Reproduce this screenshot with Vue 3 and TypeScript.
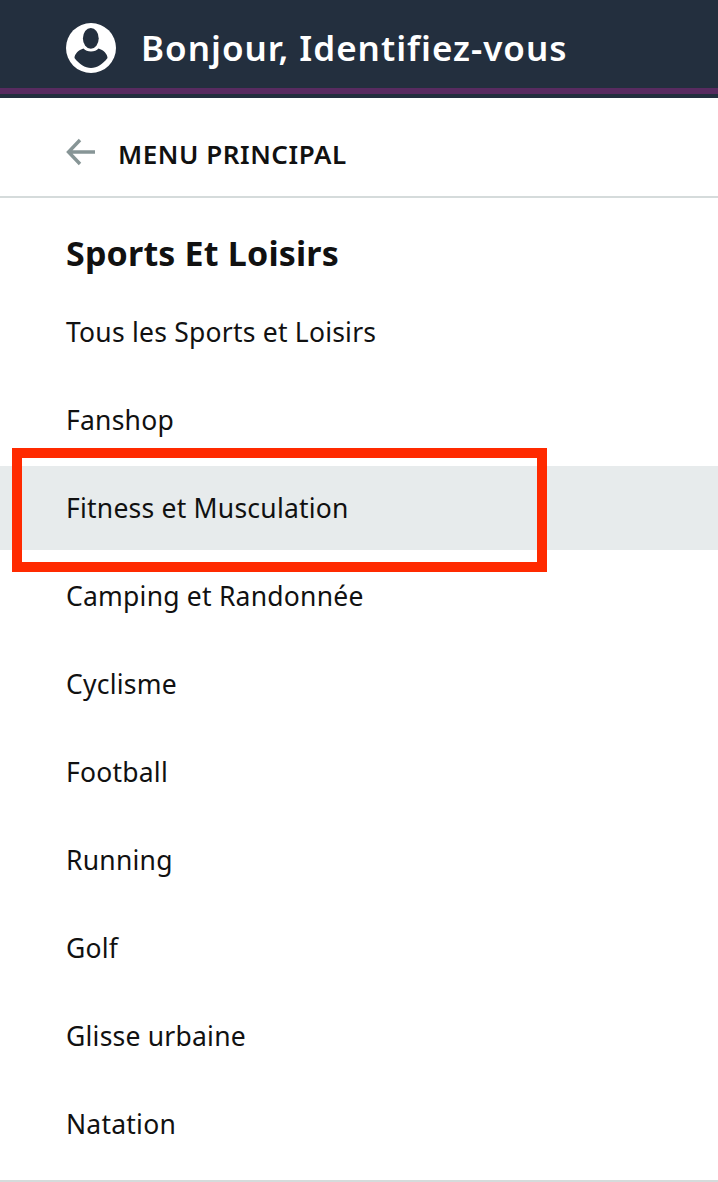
<script setup lang="ts">
const items: string[] = [
  'Tous les Sports et Loisirs',
  'Fanshop',
  'Fitness et Musculation',
  'Camping et Randonnée',
  'Cyclisme',
  'Football',
  'Running',
  'Golf',
  'Glisse urbaine',
  'Natation',
]
const activeItem = 'Fitness et Musculation'
</script>

<template>
  <div class="page">
    <header class="top">
      <div class="top-main">
        <svg class="avatar" viewBox="0 0 50 50" aria-hidden="true">
          <circle cx="25" cy="25" r="25" fill="#fff" />
          <ellipse cx="24.8" cy="15.4" rx="7.9" ry="10.4" fill="#232f3e" />
          <path d="M17.5 25.5C19 27.5 22 28.5 25 28.5S31 27.5 32.5 25.5C37.5 27 41.5 31 41.5 35 37 41 31 45 25 45S13 41 8.5 35C8.5 31 12.5 27 17.5 25.5Z" fill="#232f3e" />
        </svg>
        <span class="greeting">Bonjour, Identifiez-vous</span>
      </div>
      <div class="accent"></div>
    </header>

    <div class="back">
      <svg class="arrow" viewBox="0 0 30 28" aria-hidden="true">
        <path d="M29 14H3M14 2 2.5 14 14 26" fill="none" stroke="#879596" stroke-width="3.4" />
      </svg>
      <span class="back-label">MENU PRINCIPAL</span>
    </div>

    <section class="menu">
      <h2 class="title">Sports Et Loisirs</h2>
      <ul class="list">
        <li v-for="item in items" :key="item" class="item" :class="{ active: item === activeItem }">
          <span class="item-label">{{ item }}</span>
          <span v-if="item === activeItem" class="callout"></span>
        </li>
      </ul>
    </section>
  </div>
</template>

<style scoped>
.page {
  width: 718px;
  height: 1182px;
  overflow: hidden;
  background: #fff;
  color: #111;
  font-family: "Noto Sans", "Open Sans", sans-serif;
  box-sizing: border-box;
}
.top {
  height: 98px;
  background: #232f3e;
  display: flex;
  flex-direction: column;
}
.top-main {
  height: 88px;
  padding: 0 0 0 66px;
  display: flex;
  align-items: flex-start;
  box-sizing: border-box;
}
.avatar {
  width: 50px;
  height: 50px;
  margin-top: 23px;
  flex: none;
}
.greeting {
  margin: 24px 0 0 25px;
  font-size: 35px;
  line-height: 48px;
  font-weight: 600;
  letter-spacing: 1px;
  color: #fff;
  white-space: nowrap;
}
.accent {
  height: 6px;
  background: #582b60;
}
.back {
  height: 98px;
  padding-left: 66px;
  border-bottom: 2px solid #d5dbdb;
  display: flex;
  align-items: flex-start;
}
.arrow {
  width: 30px;
  height: 28px;
  margin-top: 40px;
  flex: none;
}
.back-label {
  margin: 38px 0 0 22px;
  font-size: 26px;
  line-height: 36px;
  font-weight: 600;
  letter-spacing: 0.55px;
  color: #111;
}
.menu {
  height: 984px;
  border-bottom: 2px solid #d5dbdb;
  box-sizing: border-box;
}
.title {
  margin: 0;
  height: 92px;
  padding: 35px 0 0 66px;
  box-sizing: border-box;
  font-size: 34px;
  line-height: 40px;
  font-weight: 700;
  letter-spacing: 0.18px;
  color: #111;
}
.list {
  list-style: none;
  margin: 0;
  padding: 0;
  display: flex;
  flex-direction: column;
  gap: 4px;
}
.item {
  position: relative;
  height: 84px;
  padding-left: 66px;
  display: flex;
  align-items: center;
  color: #111;
}
.item-label {
  font-size: 26.5px;
  line-height: 36px;
  letter-spacing: 0.22px;
}
.item.active {
  background: #e7ebec;
}
.callout {
  position: absolute;
  left: 12px;
  top: -18px;
  width: 535px;
  height: 124px;
  border: 10px solid #ff2a00;
  box-sizing: border-box;
}
</style>
